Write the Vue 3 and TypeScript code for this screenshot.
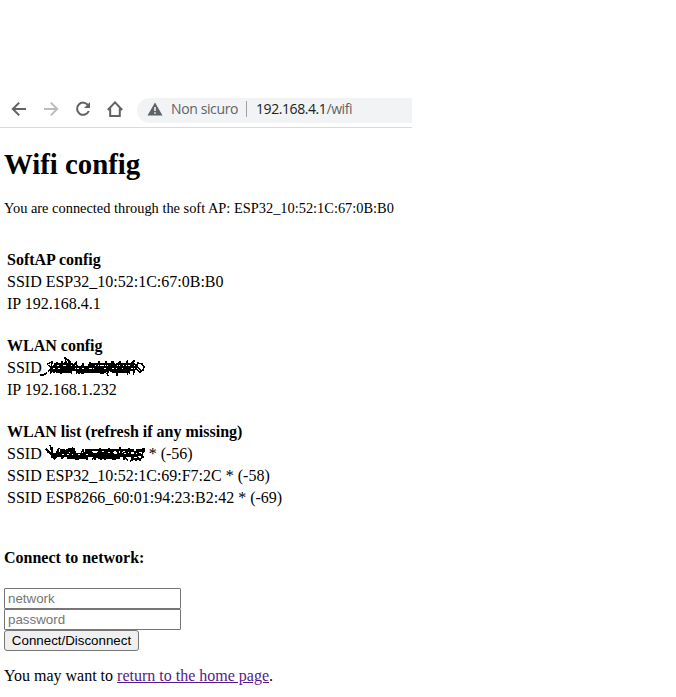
<script setup lang="ts">
interface Row {
  text: string
  scribble?: string
  tail?: string
}

interface Group {
  title: string
  rows: Row[]
}

const wlanScribble =
  'M0 18H3L7 16 M7 7L12 5 11 13 17 5 15 15 22 5 24 15 29 5 31 14 36 6 37 15 43 7 46 15 50 6 54 15 59 5 61 16 66 5 68 15 73 5 76 15 80 5 82 15 87 5 88 15 93 5 94 15 98 6 102 7 104 10 103 13 100 15 96 12 M8 14L18 7 26 14 35 7 44 14 55 7 64 15 74 7 84 14 94 7 102 14 M10 16L25 6 39 16 51 7 65 15 79 6 90 16 M12 10H98 M12 13H95 M14 7H33 M40 15H62 M53 7H70 M76 7H91 M72 15H90 M16 15H30 M27 9L25 1 31 5 M67 16L68 19 M77 15V19 M91 6L95 4 M17 15L30 10 43 16 58 11 75 15 89 10 M9 8L14 16 M21 17V8L32 16 M41 16L52 7 63 16 72 5 83 16'
const listScribble =
  'M6 6L13 13 10 2 14 15 19 5 17 13 23 7 29 15 34 6 38 16 43 7 47 16 51 7 55 16 60 6 65 16 69 6 75 16 80 5 84 16 89 6 92 17 97 7 104 6 101 16 M7 9L18 12 29 8 38 14 47 8 57 13 68 7 78 14 88 7 101 11 M14 16L24 7 36 16 48 9 61 16 75 7 88 17 M16 10L102 12 M16 13H98 M20 7L34 9 M45 7H94 M21 16L31 6 41 16 M52 16L63 7 73 16 84 7 96 17 104 14 M12 4V15 M26 7L33 5 M90 18L98 15 101 18 M27 15H48 M60 15H80 M96 8H105'

const groups: Group[] = [
  {
    title: 'SoftAP config',
    rows: [{ text: 'SSID ESP32_10:52:1C:67:0B:B0' }, { text: 'IP 192.168.4.1' }],
  },
  {
    title: 'WLAN config',
    rows: [{ text: 'SSID', scribble: wlanScribble }, { text: 'IP 192.168.1.232' }],
  },
  {
    title: 'WLAN list (refresh if any missing)',
    rows: [
      { text: 'SSID', scribble: listScribble, tail: '* (-56)' },
      { text: 'SSID ESP32_10:52:1C:69:F7:2C * (-58)' },
      { text: 'SSID ESP8266_60:01:94:23:B2:42 * (-69)' },
    ],
  },
]
</script>

<template>
  <div class="page">
    <header class="toolbar">
      <svg class="icon" viewBox="0 0 16 16"><path d="M15 8H2M8.2 1.6L1.8 8l6.4 6.4" /></svg>
      <svg class="icon faded" viewBox="0 0 16 16"><path d="M1 8h13M7.8 1.6L14.2 8l-6.4 6.4" /></svg>
      <svg class="icon" viewBox="0 0 16 16">
        <path d="M13.2 4.3A6.1 6.1 0 1 0 13.8 10" />
        <path class="solid" d="M15 1v6H9z" />
      </svg>
      <svg class="icon" viewBox="0 0 16 16"><path d="M.8 9L8 1.4 15.2 9M3.2 7.5V15h9.6V7.5" /></svg>
      <div class="address">
        <svg class="warning" viewBox="0 0 16 14">
          <path d="M8 .5L15.5 13.5H.5z" fill="#5f6368" />
          <path d="M7.2 5h1.6v4H7.2zM7.2 10.2h1.6v1.6H7.2z" fill="#f1f3f4" />
        </svg>
        <span class="insecure">Non sicuro</span>
        <span class="separator"></span>
        <span class="url">192.168.4.1<span class="path">/wifi</span></span>
      </div>
    </header>
    <main>
      <h1>Wifi config</h1>
      <p class="status">You are connected through the soft AP: ESP32_10:52:1C:67:0B:B0</p>
      <div class="groups">
        <section v-for="group in groups" :key="group.title">
          <h2>{{ group.title }}</h2>
          <div v-for="row in group.rows" :key="row.text" class="row">
            <span>{{ row.text }}</span>
            <svg v-if="row.scribble" class="scribble" viewBox="0 0 110 22"><path :d="row.scribble" /></svg>
            <span v-if="row.tail">{{ row.tail }}</span>
          </div>
        </section>
      </div>
      <h3>Connect to network:</h3>
      <form @submit.prevent>
        <input type="text" placeholder="network" />
        <input type="text" placeholder="password" />
        <button type="submit">Connect/Disconnect</button>
      </form>
      <p class="home">You may want to <a href="#">return to the home page</a>.</p>
    </main>
  </div>
</template>

<style>
body {
  margin: 0;
  background: #fff;
}
</style>

<style scoped>
.page {
  box-sizing: border-box;
  height: 697px;
  overflow: hidden;
  padding-top: 91px;
  color: #000;
  font: 16px/22px "Liberation Serif", serif;
}
.toolbar {
  box-sizing: border-box;
  width: 412px;
  height: 37px;
  display: flex;
  align-items: center;
  gap: 16px;
  padding-left: 11px;
  border-bottom: 1px solid #d8dadd;
}
.icon {
  width: 16px;
  height: 16px;
  flex: none;
  fill: none;
  stroke: #5f6368;
  stroke-width: 2;
}
.faded {
  stroke: #babcbe;
}
.solid {
  fill: #5f6368;
  stroke: none;
}
.address {
  display: flex;
  align-items: center;
  flex: 1;
  height: 25px;
  margin: 3px 0 0 -2px;
  padding-left: 10px;
  border-radius: 13px 0 0 13px;
  background: #f1f3f4;
  color: #5f6368;
  font: 14px/21px "Open Sans", "Noto Sans", sans-serif;
  white-space: nowrap;
}
.warning {
  width: 16px;
  height: 14px;
  margin: 0 8px 3px 0;
}
.insecure {
  width: 75px;
  padding-bottom: 4px;
  letter-spacing: -0.38px;
}
.separator {
  width: 1px;
  height: 16px;
  margin-bottom: 3px;
  background: #9aa0a6;
}
.url {
  margin-left: 9px;
  padding-bottom: 4px;
  color: #202124;
  letter-spacing: -0.42px;
}
.path {
  color: #5f6368;
}
main {
  padding-left: 4px;
}
h1 {
  margin: 18px 0 0;
  font-size: 28.8px;
  line-height: 36px;
}
.status {
  margin: 15px 0 0;
  font-size: 14.4px;
}
.groups {
  display: grid;
  gap: 20px;
  margin-top: 30px;
  padding-left: 3px;
}
h2,
h3 {
  margin: 0;
  font-size: 16px;
  line-height: 22px;
}
.row {
  display: flex;
  height: 22px;
  white-space: pre;
}
.scribble {
  width: 110px;
  height: 22px;
  margin: 0 -1px 0 -2px;
  fill: none;
  stroke: #000;
  stroke-width: 1.5;
  shape-rendering: crispEdges;
}
h3 {
  margin-top: 38px;
}
form {
  display: flex;
  flex-direction: column;
  align-items: flex-start;
  margin-top: 19px;
}
input {
  box-sizing: border-box;
  width: 177px;
  height: 21px;
  margin: 0;
  padding: 1px 3px;
  border: 1px solid #767676;
  border-radius: 1px;
  font: 13.333px "Liberation Sans", sans-serif;
}
input::placeholder {
  color: #757575;
}
button {
  box-sizing: border-box;
  width: 135px;
  height: 21px;
  padding: 0;
  border: 1px solid #767676;
  border-radius: 3px;
  background: #efefef;
  color: #000;
  font: 13.333px "Liberation Sans", sans-serif;
}
.home {
  margin: 14px 0 0;
}
a {
  color: #551a8b;
}
</style>
